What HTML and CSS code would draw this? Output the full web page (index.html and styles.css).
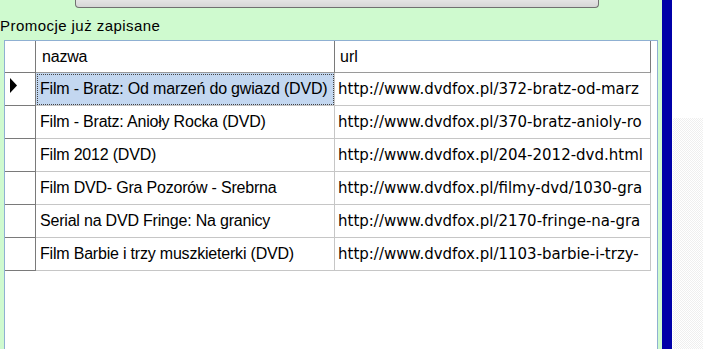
FILE: index.html
```html
<!DOCTYPE html>
<html>
<head>
<meta charset="utf-8">
<link rel="stylesheet" href="styles.css">
</head>
<body>
<div class="screen">
  <div class="panel">
    <div class="btn-row"><div class="btn"></div></div>
    <div class="label">Promocje już zapisane</div>
    <div class="grid">
      <div class="row head">
        <div class="rh"></div>
        <div class="c1">nazwa</div>
        <div class="c2">url</div>
      </div>
      <div class="row sel">
        <div class="rh"><svg class="arrow" width="7" height="15" viewBox="0 0 7 15"><polygon points="0,0 7,7.5 0,15" fill="#000"/></svg></div>
        <div class="c1">Film - Bratz: Od marzeń do gwiazd (DVD)</div>
        <div class="c2">http://www.dvdfox.pl/372-bratz-od-marz</div>
      </div>
      <div class="row">
        <div class="rh"></div>
        <div class="c1">Film - Bratz: Anioły Rocka (DVD)</div>
        <div class="c2">http://www.dvdfox.pl/370-bratz-anioly-ro</div>
      </div>
      <div class="row">
        <div class="rh"></div>
        <div class="c1">Film 2012 (DVD)</div>
        <div class="c2">http://www.dvdfox.pl/204-2012-dvd.html</div>
      </div>
      <div class="row">
        <div class="rh"></div>
        <div class="c1">Film DVD- Gra Pozorów - Srebrna</div>
        <div class="c2">http://www.dvdfox.pl/filmy-dvd/1030-gra</div>
      </div>
      <div class="row">
        <div class="rh"></div>
        <div class="c1">Serial na DVD Fringe: Na granicy</div>
        <div class="c2">http://www.dvdfox.pl/2170-fringe-na-gra</div>
      </div>
      <div class="row">
        <div class="rh"></div>
        <div class="c1">Film Barbie i trzy muszkieterki (DVD)</div>
        <div class="c2">http://www.dvdfox.pl/1103-barbie-i-trzy-</div>
      </div>
    </div>
  </div>
  <div class="bar"></div>
  <div class="side"><div class="dots"></div></div>
</div>
</body>
</html>
```
FILE: styles.css
```css
html, body {
  margin: 0;
  padding: 0;
  background: #ffffff;
}
body {
  width: 703px;
  height: 349px;
  overflow: hidden;
  font-family: "Liberation Sans", Arial, sans-serif;
  color: #000;
}
.screen {
  display: flex;
  width: 703px;
  height: 349px;
}
.panel {
  width: 662px;
  flex: none;
  background: #cffacf;
  display: flex;
  flex-direction: column;
}
.btn-row {
  height: 8px;
  flex: none;
  padding-left: 75px;
}
.btn {
  width: 524px;
  height: 8px;
  box-sizing: border-box;
  border: 1px solid #707070;
  border-top: none;
  border-radius: 0 0 4px 4px;
  background: linear-gradient(#e4e4e4, #d6d6d6);
}
.label {
  height: 32px;
  flex: none;
  box-sizing: border-box;
  padding-top: 9px;
  font-size: 15px;
  letter-spacing: 0.45px;
  line-height: 17px;
  white-space: nowrap;
}
.grid {
  margin-left: 4px;
  width: 654px;
  flex: 1;
  box-sizing: border-box;
  border: 1px solid #8fb0d2;
  border-bottom: none;
  background: #ffffff;
}
.row {
  display: flex;
  height: 33px;
}
.row.head {
  height: 32px;
}
.rh {
  width: 31px;
  flex: none;
  box-sizing: border-box;
  border-right: 1px solid #7a7a7a;
  border-bottom: 1px solid #7a7a7a;
  background: #ffffff;
  position: relative;
}
.c1, .c2 {
  flex: none;
  box-sizing: border-box;
  border-right: 1px solid #c6c6c6;
  border-bottom: 1px solid #c6c6c6;
  white-space: nowrap;
  overflow: hidden;
  line-height: 32px;
}
.c1 {
  width: 299px;
  padding-left: 4px;
  font-size: 16px;
  letter-spacing: -0.2px;
}
.c2 {
  width: 316px;
  padding-left: 3px;
  font-family: "DejaVu Sans", Verdana, sans-serif;
  font-size: 15px;
  letter-spacing: 0px;
}
.head .c1, .head .c2 {
  line-height: 31px;
  border-right-color: #7a7a7a;
  border-bottom-color: #9a9a9a;
}
.head .c1 {
  padding-left: 6px;
}
.head .c2 {
  font-family: "Liberation Sans", Arial, sans-serif;
  font-size: 16px;
  padding-left: 5px;
}
.sel .c1 {
  background: #c3d7f0;
  outline: 1px dotted #444;
  outline-offset: -2px;
}
.arrow {
  position: absolute;
  left: 5px;
  top: 5px;
}
.bar {
  width: 10px;
  flex: none;
  background: #0000a8;
}
.side {
  flex: 1;
  display: flex;
  flex-direction: column;
  padding-top: 118px;
  padding-left: 1px;
}
.dots {
  flex: 1;
  background: repeating-conic-gradient(#efefef 0 25%, #ffffff 0 50%) 0 0 / 2px 2px;
}
```
